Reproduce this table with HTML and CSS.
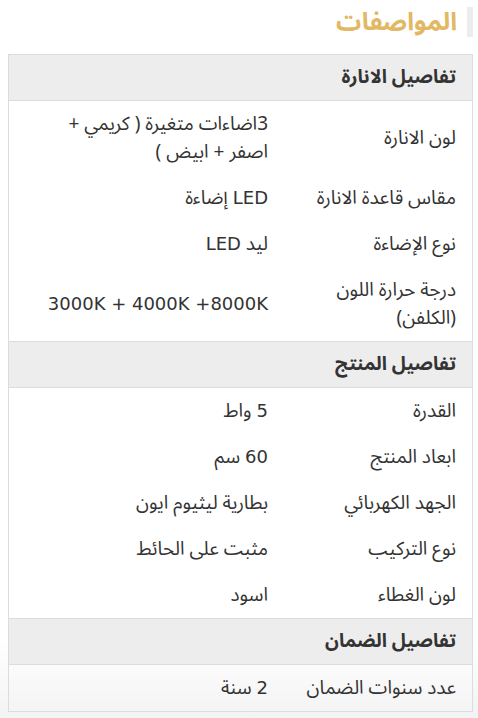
FILE: index.html
```html
<!DOCTYPE html>
<html lang="ar" dir="rtl">
<head>
<meta charset="utf-8">
<title>المواصفات</title>
<link rel="stylesheet" href="styles.css">
</head>
<body>
<div class="page">
  <h2 class="title">المواصفات</h2>
  <table class="specs">
    <tbody>
      <tr class="section"><th colspan="2">تفاصيل الانارة</th></tr>
      <tr><td class="label">لون الانارة</td><td class="value">3اضاءات متغيرة ( كريمي + اصفر + ابيض )</td></tr>
      <tr><td class="label">مقاس قاعدة الانارة</td><td class="value"><span class="en">LED</span> إضاءة</td></tr>
      <tr><td class="label">نوع الإضاءة</td><td class="value">ليد <span class="en">LED</span></td></tr>
      <tr><td class="label">درجة حرارة اللون (الكلفن)</td><td class="value"><span class="en">3000K + 4000K +8000K</span></td></tr>
      <tr class="section"><th colspan="2">تفاصيل المنتج</th></tr>
      <tr><td class="label">القدرة</td><td class="value"><span class="en">5</span> واط</td></tr>
      <tr><td class="label">ابعاد المنتج</td><td class="value"><span class="en">60</span> سم</td></tr>
      <tr><td class="label">الجهد الكهربائي</td><td class="value">بطارية ليثيوم ايون</td></tr>
      <tr><td class="label">نوع التركيب</td><td class="value">مثبت على الحائط</td></tr>
      <tr><td class="label">لون الغطاء</td><td class="value">اسود</td></tr>
      <tr class="section"><th colspan="2">تفاصيل الضمان</th></tr>
      <tr><td class="label">عدد سنوات الضمان</td><td class="value"><span class="en">2</span> سنة</td></tr>
    </tbody>
  </table>
</div>
</body>
</html>
```

FILE: styles.css
```css
html, body {
  margin: 0;
  padding: 0;
}
body {
  direction: rtl;
  font-family: "Noto Sans Arabic", "DejaVu Sans", sans-serif;
  color: #333;
  background: linear-gradient(to bottom, #ffffff 0, #ffffff 640px, #f3f3f3 718px);
  min-height: 718px;
}
.page {
  width: 465px;
  margin-right: 5px;
  margin-left: 8px;
  padding-top: 0;
}
.title {
  display: flex;
  align-items: center;
  gap: 10px;
  margin: 0 0 10px 0;
  height: 44px;
  line-height: normal;
  font-size: 25px;
  font-weight: bold;
  color: #e3b865;
}
.title::before {
  content: "";
  display: block;
  width: 6px;
  height: 30px;
  background: #ececec;
}
.specs {
  width: 100%;
  border-collapse: collapse;
  border: 1px solid #dcdcdc;
  font-size: 19px;
}
.specs th {
  background: #ededed;
  text-align: right;
  font-weight: bold;
  font-size: 19px;
  padding: 9px 16px;
  line-height: 27px;
  border-top: 1px solid #dcdcdc;
  border-bottom: 1px solid #dcdcdc;
}
.specs td {
  padding: 9px 16px;
  line-height: 28px;
  vertical-align: middle;
  text-align: right;
}
.specs .label {
  width: 156px;
}
.en {
  font-family: "DejaVu Sans", sans-serif;
  font-size: 18px;
}
```
